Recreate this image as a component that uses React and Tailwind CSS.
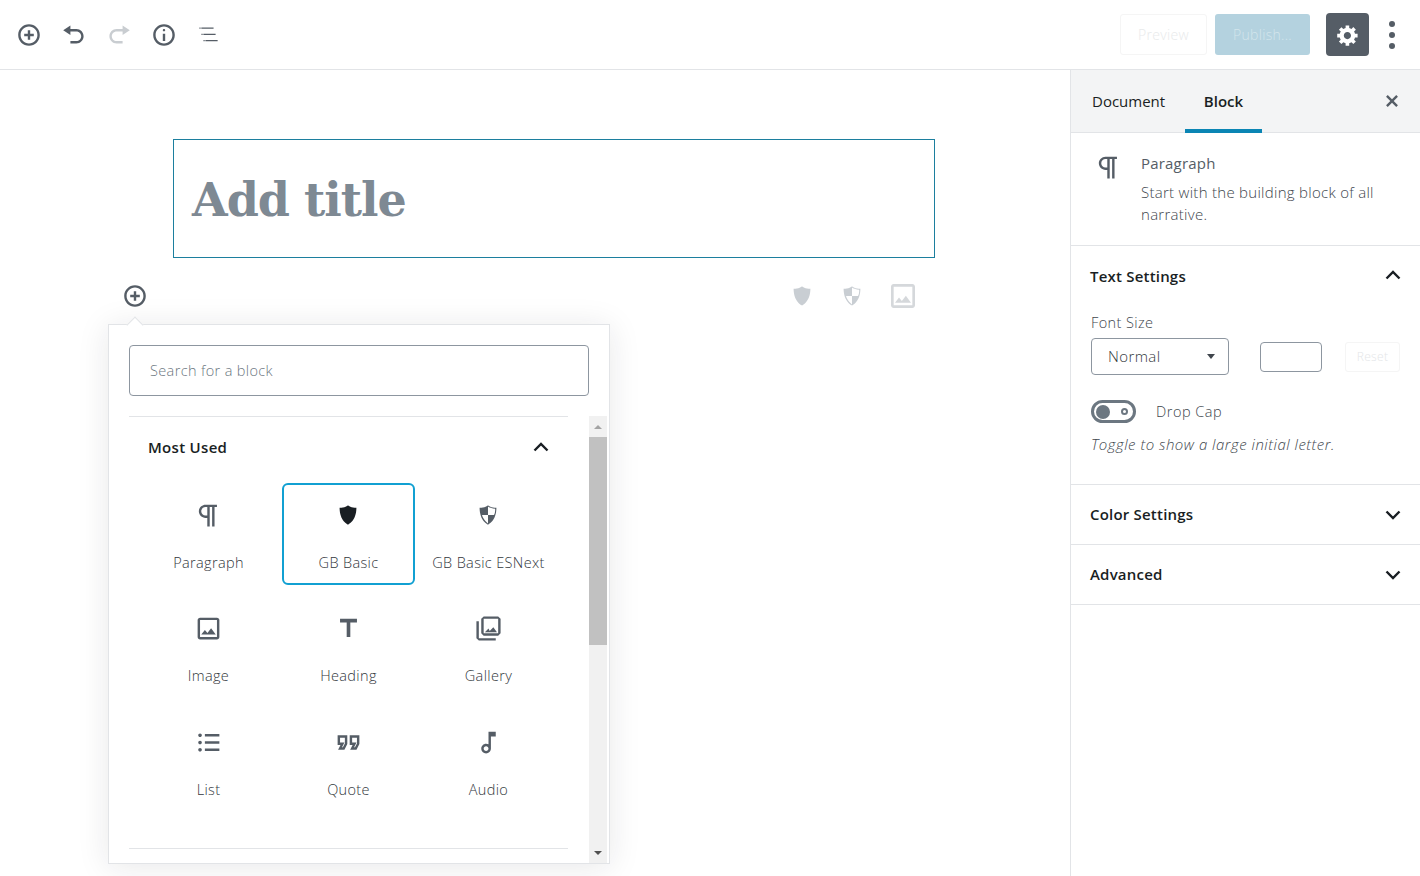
const P = {
  insert: "M10 1c-5 0-9 4-9 9s4 9 9 9 9-4 9-9-4-9-9-9zm0 16c-3.9 0-7-3.1-7-7s3.1-7 7-7 7 3.1 7 7-3.1 7-7 7zm1-11H9v3H6v2h3v3h2v-3h3V9h-3V6z",
  undo: "M12 5H7V2L1 6l6 4V7h5c2.2 0 4 1.8 4 4s-1.8 4-4 4H7v2h5c3.3 0 6-2.7 6-6s-2.7-6-6-6z",
  redo: "M8 5h5V2l6 4-6 4V7H8c-2.2 0-4 1.8-4 4s1.8 4 4 4h5v2H8c-3.3 0-6-2.7-6-6s2.7-6 6-6z",
  info: "M9 15h2V9H9v6zm1-10c-.5 0-1 .5-1 1s.5 1 1 1 1-.5 1-1-.5-1-1-1zm0-4c-5 0-9 4-9 9s4 9 9 9 9-4 9-9-4-9-9-9zm0 16c-3.9 0-7-3.1-7-7s3.1-7 7-7 7 3.1 7 7-3.1 7-7 7z",
  toc: "M2 3.7h1v1H2zM3.6 3.7h10.2v1H3.6zM3.7 8.9h1v1h-1zM5.3 8.9h10.2v1H5.3zM5.4 14.2h1v1h-1zM7 14.2h10.2v1H7z",
  gear: "M18 12h-2.18c-.17.7-.44 1.35-.81 1.93l1.54 1.54-2.1 2.1-1.54-1.54c-.58.36-1.23.63-1.91.79V19H8v-2.18c-.68-.16-1.33-.43-1.91-.79l-1.54 1.54-2.12-2.12 1.54-1.54c-.36-.58-.63-1.23-.79-1.91H1V9.03h2.17c.16-.7.44-1.35.8-1.94L2.43 5.55l2.1-2.1 1.54 1.54c.58-.37 1.24-.64 1.93-.81V2h3v2.18c.68.16 1.33.43 1.91.79l1.54-1.54 2.12 2.12-1.54 1.54c.36.59.64 1.24.8 1.94H18V12zm-8.5 1.5c1.66 0 3-1.34 3-3s-1.34-3-3-3-3 1.34-3 3 1.34 3 3 3z",
  close: "M14.95 6.46L11.41 10l3.54 3.54-1.41 1.41L10 11.42l-3.54 3.53-1.41-1.41L8.58 10 5.05 6.46l1.41-1.41L10 8.58l3.54-3.53z",
  shield: "M10 2s3 2 7 2c0 11-7 14-7 14S3 15 3 4c4 0 7-2 7-2z",
  shieldAlt: "M10 2s3 2 7 2c0 11-7 14-7 14S3 15 3 4c4 0 7-2 7-2zm0 8h5s1-1 1-5c0 0-5-1-6-2v7H5c1 4 5 7 5 7v-7z",
};
const P24 = {
  paragraph: "M11 5v7H9.5C7.6 12 6 10.4 6 8.5S7.6 5 9.5 5H11m8-2H9.5C6.5 3 4 5.5 4 8.5S6.5 14 9.5 14H11v7h2V5h2v16h2V5h2V3z",
  image: "M19,5v14H5V5H19 M19,3H5C3.9,3,3,3.9,3,5v14c0,1.1,0.9,2,2,2h14c1.1,0,2-0.9,2-2V5C21,3.9,20.1,3,19,3L19,3z M14.14,11.86l-3,3.87L9,13.14L6,17h12L14.14,11.86z",
  heading: "M5 4v3h5.5v12h3V7H19V4z",
  gallery: "M20 4v12H8V4h12m0-2H8L6 4v12l2 2h12l2-2V4l-2-2z M12 12l1 2 3-3 3 4H9z M2 6v14l2 2h14v-2H4V6H2z",
  list: "M9 19h12v-2H9v2zm0-6h12v-2H9v2zm0-8v2h12V5H9zm-4-.5c-.828 0-1.5.672-1.5 1.5S4.172 7.5 5 7.5 6.5 6.828 6.5 6 5.828 4.5 5 4.5zm0 6c-.828 0-1.5.672-1.5 1.5s.672 1.5 1.5 1.5 1.5-.672 1.5-1.5-.672-1.5-1.5-1.5zm0 6c-.828 0-1.5.672-1.5 1.5s.672 1.5 1.5 1.5 1.5-.672 1.5-1.5-.672-1.5-1.5-1.5z",
  quote: "M18.62 18h-5.24l2-4H13V6h8v7.24L18.62 18zm-2-2h.76L19 12.76V8h-4v4h3.62l-2 4zm-8 2H3.38l2-4H3V6h8v7.24L8.62 18zm-2-2h.76L9 12.76V8H5v4h3.62l-2 4z",
  audio: "M12 3v10.55c-.59-.34-1.27-.55-2-.55-2.21 0-4 1.79-4 4s1.79 4 4 4 4-1.79 4-4V7h4V3h-6zm-2 16c-1.1 0-2-.9-2-2s.9-2 2-2 2 .9 2 2-.9 2-2 2z",
};

function Dash({ d, className = "", size = 24 }) {
  return (
    <svg width={size} height={size} viewBox="0 0 20 20" fill="currentColor" className={className}>
      <path d={d} />
    </svg>
  );
}
function Mat({ d, className = "", size = 29 }) {
  return (
    <svg width={size} height={size} viewBox="0 0 24 24" fill="currentColor" className={className}>
      <path d={d} />
    </svg>
  );
}
function Chevron({ up, className = "" }) {
  return (
    <svg width="20" height="20" viewBox="0 0 20 20" fill="none" stroke="#191e23" strokeWidth="2.4" className={className}>
      <path d={up ? "M3.5 13.5L10 7l6.5 6.5" : "M3.5 6.5L10 13l6.5-6.5"} />
    </svg>
  );
}

function Block({ label, icon, selected, dark }) {
  return (
    <div
      className={
        "w-[133px] h-[102px] mx-[3.5px] mb-[11.5px] rounded-[6px] flex flex-col items-center pt-[18px] border-2 " +
        (selected ? "border-[#11a0d2]" : "border-transparent")
      }
    >
      <div className={"h-[24px] flex items-center justify-center " + (dark ? "text-[#191e23]" : "text-[#555d66]")}>{icon}</div>
      <div className="mt-[25.5px] pl-[1px] text-[14.5px] leading-[20px] tracking-[0.35px] text-[#32373c] whitespace-nowrap">{label}</div>
    </div>
  );
}

function PanelHead({ title, up, h }) {
  return (
    <div className={"flex items-center justify-between pl-[19px] pr-[17px] " + h}>
      <span className="text-[15px] font-semibold tracking-[0.2px] text-[#191e23]">{title}</span>
      <Chevron up={up} className={up ? "-mt-[2px]" : ""} />
    </div>
  );
}

export default function App() {
  return (
    <div className="w-[1420px] h-[876px] overflow-hidden bg-white flex flex-col font-['Open_Sans',sans-serif] font-light">
      {/* Top bar */}
      <header className="h-[70px] shrink-0 border-b border-[#e2e4e7] flex items-center justify-between pl-[17px] pr-[18px]">
        <div className="flex items-center gap-[21px] text-[#555d66]">
          <Dash d={P.insert} />
          <Dash d={P.undo} />
          <Dash d={P.redo} className="text-[#c9cdd1]" />
          <Dash d={P.info} />
          <Dash d={P.toc} />
        </div>
        <div className="flex items-center">
          <div className="w-[87px] h-[41px] border border-[#f5f5f5] rounded-[3px] flex items-center justify-center text-[14px] tracking-[0.3px] text-[#e8eaeb]">Preview</div>
          <div className="ml-[8px] w-[95px] h-[41px] rounded-[3px] bg-[#b4d2df] flex items-center justify-center text-[14px] tracking-[0.3px] text-[#d3e5ec]">Publish...</div>
          <div className="ml-[16px] w-[43px] h-[43px] rounded-[4px] bg-[#555d66] flex items-center justify-center text-white">
            <Dash d={P.gear} />
          </div>
          <div className="ml-[12px] w-[21px] flex flex-col items-center gap-[5px]">
            <span className="w-[6px] h-[6px] rounded-full bg-[#555d66]" />
            <span className="w-[6px] h-[6px] rounded-full bg-[#555d66]" />
            <span className="w-[6px] h-[6px] rounded-full bg-[#555d66]" />
          </div>
        </div>
      </header>

      <div className="flex-1 flex min-h-0">
        {/* Editor */}
        <main className="relative w-[1070px] shrink-0">
          <div className="mt-[69px] ml-[173px] w-[762px] h-[119px] border border-[#1c7f9e] flex items-center pl-[18px] pt-[2px]">
            <span className="font-['DejaVu_Serif',serif] font-bold text-[46px] leading-none text-[#7e8993] tracking-[-1px]">Add title</span>
          </div>
          <div className="mt-[26px] ml-[123px] w-[792px] h-[24px] flex items-center justify-between text-[#c9ced3]">
            <Dash d={P.insert} className="text-[#555d66]" />
            <div className="flex items-center gap-[26px]">
              <Dash d={P.shield} />
              <Dash d={P.shieldAlt} />
              <Mat d={P24.image} size={32} className="-mr-[4px] -ml-[3px] text-[#d5d8db]" />
            </div>
          </div>

          {/* Inserter popover */}
          <div className="absolute left-[108px] top-[254px] w-[502px] h-[540px] bg-white border border-[#e2e4e7] shadow-[0_3px_30px_rgba(25,30,35,0.1)] flex flex-col">
            <div className="absolute left-[20px] -top-[6px] w-[12px] h-[12px] rotate-45 bg-white border-l border-t border-[#e2e4e7]" />
            <div className="relative px-[20px] pt-[20px] pb-[20px]">
              <div className="h-[51px] border border-[#8d96a0] rounded-[4px] flex items-center pl-[20px] text-[14.5px] tracking-[0.36px] text-[#6c7781]">Search for a block</div>
            </div>
            <div className="flex-1 flex min-h-0 pr-[2px]">
              <div className="flex-1 pl-[20px] pr-[21px] flex flex-col min-w-0">
                <div className="border-t border-[#e2e4e7] flex-1 flex flex-col">
                  <div className="h-[60px] shrink-0 flex items-center justify-between pl-[19px] pr-[17px]">
                    <span className="text-[15px] font-semibold tracking-[0.3px] text-[#191e23]">Most Used</span>
                    <Chevron up />
                  </div>
                  <div className="flex flex-wrap ml-[9px] w-[430px] pt-[6px]">
                    <Block label="Paragraph" icon={<Mat d={P24.paragraph} />} />
                    <Block label="GB Basic" dark selected icon={<Dash d={P.shield} />} />
                    <Block label="GB Basic ESNext" icon={<Dash d={P.shieldAlt} />} />
                    <Block label="Image" icon={<Mat d={P24.image} />} />
                    <Block label="Heading" icon={<Mat d={P24.heading} />} />
                    <Block label="Gallery" icon={<Mat d={P24.gallery} />} />
                    <Block label="List" icon={<Mat d={P24.list} />} />
                    <Block label="Quote" icon={<Mat d={P24.quote} />} />
                    <Block label="Audio" icon={<Mat d={P24.audio} />} />
                  </div>
                </div>
                <div className="border-t border-[#e2e4e7] h-[15px] shrink-0" />
              </div>
              <div className="w-[18px] shrink-0 bg-[#f1f1f1] flex flex-col items-center">
                <div className="h-[21px] shrink-0 flex items-center justify-center">
                  <span className="w-0 h-0 border-x-[4px] border-x-transparent border-b-[4px] border-b-[#a3a3a3]" />
                </div>
                <div className="w-full h-[208px] bg-[#c1c1c1]" />
                <div className="flex-1" />
                <div className="h-[21px] shrink-0 flex items-center justify-center">
                  <span className="w-0 h-0 border-x-[4px] border-x-transparent border-t-[4px] border-t-[#505050]" />
                </div>
              </div>
            </div>
          </div>
        </main>

        {/* Sidebar */}
        <aside className="flex-1 border-l border-[#e2e4e7] flex flex-col">
          <div className="h-[63px] shrink-0 bg-[#f3f4f5] border-b border-[#e2e4e7] flex items-stretch pl-[21px] pr-[17px] relative">
            <div className="flex items-center text-[15px] text-[#191e23] font-normal w-[94px]">Document</div>
            <div className="flex items-center justify-center w-[77px] -ml-[1px] text-[15px] font-semibold text-[#191e23] border-b-[4px] border-[#0a85b4] -mb-[1px] pt-[4px]">Block</div>
            <div className="flex-1" />
            <div className="flex items-center text-[#555d66]"><Dash d={P.close} size={24} className="-mr-[1px] -mt-[1px]" /></div>
          </div>
          <div className="h-[113px] shrink-0 border-b border-[#e2e4e7] flex pl-[23px] pr-[30px] pt-[20px]">
            <Mat d={P24.paragraph} className="text-[#555d66] shrink-0" />
            <div className="ml-[18px]">
              <div className="text-[15px] leading-[20px] font-normal tracking-[0.2px] text-[#555d66]">Paragraph</div>
              <div className="mt-[8px] text-[15px] leading-[22px] tracking-[0.28px] text-[#40464d]">Start with the building block of all narrative.</div>
            </div>
          </div>
          <div className="h-[239px] shrink-0 border-b border-[#e2e4e7] flex flex-col">
            <PanelHead title="Text Settings" up h="h-[60px] shrink-0" />
            <div className="pl-[20px] pr-[20px]">
              <div className="mt-[7px] text-[14.5px] leading-[20px] tracking-[0.4px] text-[#40464d]">Font Size</div>
              <div className="mt-[5px] flex items-center">
                <div className="w-[138px] h-[37px] border border-[#8d96a0] rounded-[4px] flex items-center justify-between pl-[16px] pr-[13px] text-[15px] tracking-[0.4px] text-[#32373c]">
                  Normal
                  <span className="w-0 h-0 border-x-[4px] border-x-transparent border-t-[5px] border-t-[#40464d]" />
                </div>
                <div className="ml-[31px] w-[62px] h-[30px] border border-[#8d96a0] rounded-[4px]" />
                <div className="ml-[23px] w-[55px] h-[30px] border border-[#f5f5f5] rounded-[3px] flex items-center justify-center text-[12px] tracking-[0.3px] text-[#e4e6e8]">Reset</div>
              </div>
              <div className="mt-[25px] flex items-center">
                <div className="w-[45px] h-[23px] rounded-full border-[3px] border-[#6c7781] flex items-center justify-between pl-[2px] pr-[5px]">
                  <span className="w-[14px] h-[14px] rounded-full bg-[#6c7781]" />
                  <span className="w-[7px] h-[7px] rounded-full border-2 border-[#6c7781]" />
                </div>
                <span className="ml-[20px] text-[14.5px] tracking-[0.5px] text-[#40464d]">Drop Cap</span>
              </div>
              <div className="mt-[11px] text-[15px] leading-[20px] tracking-[0.5px] italic text-[#40464d]">Toggle to show a large initial letter.</div>
            </div>
          </div>
          <div className="border-b border-[#e2e4e7]"><PanelHead title="Color Settings" h="h-[59px]" /></div>
          <div className="border-b border-[#e2e4e7]"><PanelHead title="Advanced" h="h-[59px]" /></div>
        </aside>
      </div>
    </div>
  );
}
